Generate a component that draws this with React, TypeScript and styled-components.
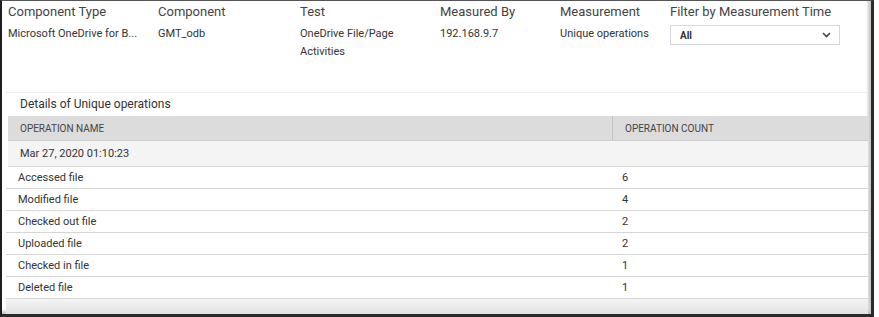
import styled, { createGlobalStyle } from "styled-components";

const GlobalStyle = createGlobalStyle`
  html, body {
    margin: 0;
    padding: 0;
    background: #ffffff;
  }
  body {
    font-family: Roboto, "Liberation Sans", Arial, sans-serif;
    color: #333333;
  }
`;

interface IOperation {
  name: string;
  count: number;
}

const operations: IOperation[] = [
  { name: "Accessed file", count: 6 },
  { name: "Modified file", count: 4 },
  { name: "Checked out file", count: 2 },
  { name: "Uploaded file", count: 2 },
  { name: "Checked in file", count: 1 },
  { name: "Deleted file", count: 1 },
];

const Frame = styled.div`
  width: 869px;
  height: 313px;
  border-left: 2px solid #1e1e1e;
  border-top: 1px solid #555555;
  border-right: 3px solid #2a2a2a;
  border-bottom: 3px solid #2a2a2a;
  display: flex;
  flex-direction: column;
  background: #ffffff;
  box-shadow: inset -4px -4px 3px -1px #c8c8c8;
  overflow: hidden;
`;

const InfoGrid = styled.div`
  display: grid;
  grid-template-columns: 150px 142px 140px 120px 110px 1fr;
  padding: 2px 0 0 6px;
  row-gap: 5px;
`;

const Label = styled.div`
  font-size: 13px;
  color: #444444;
  line-height: 17px;
`;

const Value = styled.div`
  font-size: 11px;
  color: #333333;
  line-height: 18px;
  padding-right: 8px;
`;

const SelectBox = styled.div`
  width: 170px;
  height: 20px;
  box-sizing: border-box;
  border: 1px solid #d4d9e0;
  display: flex;
  align-items: center;
  justify-content: space-between;
  padding: 0 8px 0 9px;
  font-size: 10px;
  font-weight: 700;
  color: #333333;
`;

const Panel = styled.div`
  margin: 31px 3px 0 4px;
  border-top: 1px solid #eeeeee;
  display: flex;
  flex-direction: column;
`;

const PanelTitle = styled.div`
  height: 23px;
  line-height: 23px;
  padding-left: 14px;
  font-size: 12px;
  color: #333333;
`;

const Row = styled.div<{ $kind?: "head" | "date" | "data" }>`
  display: grid;
  grid-template-columns: 604px 1fr;
  height: ${(p) => (p.$kind === "head" ? "24px" : p.$kind === "date" ? "25px" : "21px")};
  background: ${(p) =>
    p.$kind === "head" ? "#dcdcdc" : p.$kind === "date" ? "#f4f4f4" : "#ffffff"};
  border-bottom: 1px solid ${(p) => (p.$kind === "head" ? "#cfcfcf" : "#d6d6d6")};
  margin-left: ${(p) => (p.$kind === "data" ? "0" : "2px")};
  font-size: ${(p) => (p.$kind === "head" ? "10px" : "11px")};
  color: ${(p) => (p.$kind === "head" ? "#444444" : "#333333")};
`;

const Cell = styled.div<{ $divider?: boolean }>`
  display: flex;
  align-items: center;
  padding-left: 12px;
  border-left: ${(p) => (p.$divider ? "1px solid #c4c4c4" : "none")};
`;

const Footer = styled.div`
  flex: 1;
  background: linear-gradient(#f4f4f4, #e2e2e2);
  margin: 0 3px 0 4px;
`;

function Chevron() {
  return (
    <svg width="9" height="6" viewBox="0 0 9 6">
      <path d="M1 1 L4.5 4.5 L8 1" fill="none" stroke="#444" strokeWidth="1.6" />
    </svg>
  );
}

function App() {
  return (
    <>
      <GlobalStyle />
      <Frame>
        <InfoGrid>
          <Label>Component Type</Label>
          <Label>Component</Label>
          <Label>Test</Label>
          <Label>Measured By</Label>
          <Label>Measurement</Label>
          <Label>Filter by Measurement Time</Label>
          <Value>Microsoft OneDrive for B...</Value>
          <Value>GMT_odb</Value>
          <Value>
            OneDrive File/Page
            <br />
            Activities
          </Value>
          <Value>192.168.9.7</Value>
          <Value>Unique operations</Value>
          <div>
            <SelectBox>
              All
              <Chevron />
            </SelectBox>
          </div>
        </InfoGrid>
        <Panel>
          <PanelTitle>Details of Unique operations</PanelTitle>
          <Row $kind="head">
            <Cell>OPERATION NAME</Cell>
            <Cell $divider>OPERATION COUNT</Cell>
          </Row>
          <Row $kind="date">
            <Cell>Mar 27, 2020 01:10:23</Cell>
            <Cell />
          </Row>
          {operations.map((op, i) => (
            <Row $kind="data" key={i}>
              <Cell>{op.name}</Cell>
              <Cell>{op.count}</Cell>
            </Row>
          ))}
        </Panel>
        <Footer />
      </Frame>
    </>
  );
}

export default App;
